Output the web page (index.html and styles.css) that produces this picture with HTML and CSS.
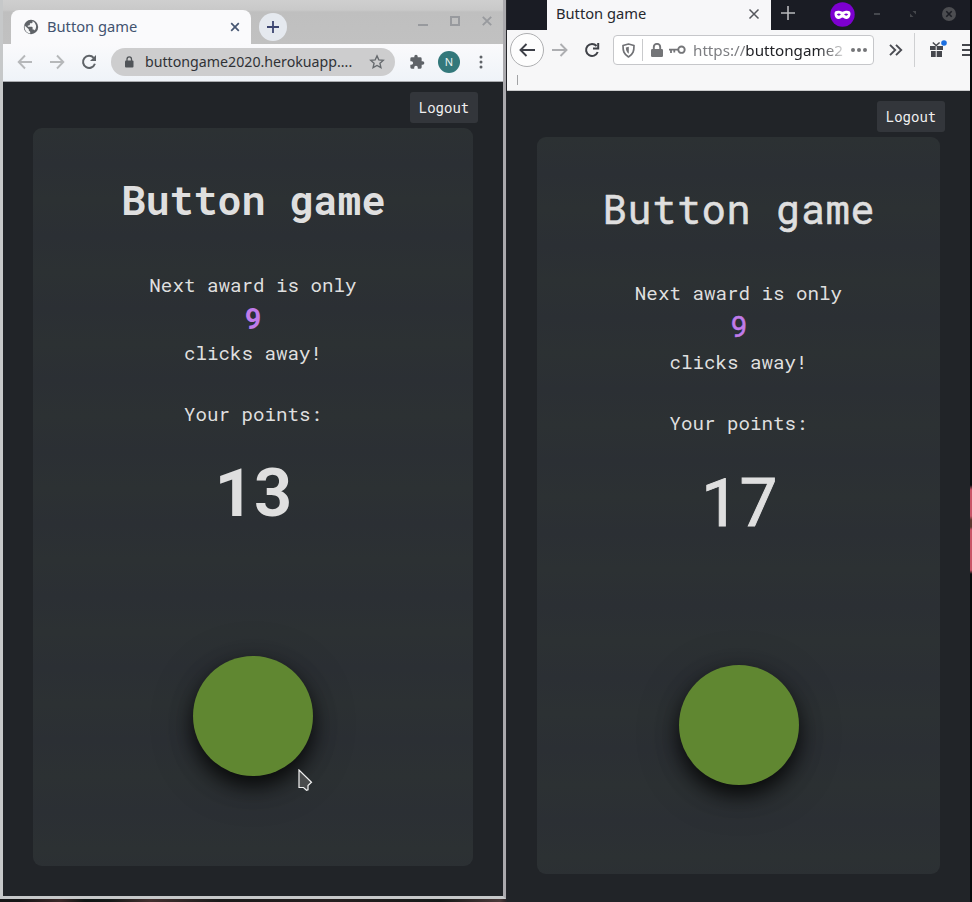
FILE: index.html
```html
<!DOCTYPE html>
<html lang="en">
<head>
<meta charset="utf-8">
<title>Button game</title>
<link rel="stylesheet" href="styles.css">
</head>
<body>
<div class="desktop">
  <section class="window chrome">
    <header class="c-strip">
      <div class="c-tab">
        <svg width="16" height="16" viewBox="0 0 16 16"><circle cx="8" cy="8" r="7.2" fill="#5f6368"/><path d="M1.6 6.4 5.8 10.3v1.2l1.4 1.2v1.7C4 14.200 1.600 11.500 1.600 8zM9.600 1.900v1c0 .8-.6 1.400-1.400 1.400H6.900v1.300c0 .5-.4.800-.8.800H4.800v1.400h4.100c.4 0 .7.300.7.700v2h.8c.6 0 1.100.4 1.300.9A6.200 6.200 0 0 0 9.600 1.900z" fill="#f6f7f8"/></svg>
        <span class="c-title">Button game</span>
        <svg width="10" height="10" viewBox="0 0 10 10"><path d="M1.200 1.200l7.600 7.600M8.800 1.200 1.200 8.800" stroke="#465672" stroke-width="1.700"/></svg>
      </div>
      <div class="c-new"><svg width="14" height="14" viewBox="0 0 14 14"><path d="M7 1v12M1 7h12" stroke="#3c4570" stroke-width="1.800"/></svg></div>
      <div class="c-controls">
        <svg width="10" height="12" viewBox="0 0 10 12"><path d="M0 10h10" stroke="#989a9e" stroke-width="2"/></svg>
        <svg width="10" height="12" viewBox="0 0 10 12"><path d="M1 2h8v8H1z" fill="none" stroke="#989a9e" stroke-width="2"/></svg>
        <svg width="10" height="12" viewBox="0 0 10 12"><path d="M.8 1.800l8.400 8.400M9.200 1.800.8 10.200" stroke="#989a9e" stroke-width="1.900"/></svg>
      </div>
    </header>
    <div class="c-toolbar">
      <svg class="c-nav" width="16" height="16" viewBox="0 0 16 16"><path d="M15 8H2M8 1.500 1.700 8 8 14.500" fill="none" stroke="#b6b8ba" stroke-width="1.900"/></svg>
      <svg class="c-nav" width="16" height="16" viewBox="0 0 16 16"><path d="M1 8h13M8 1.500 14.300 8 8 14.500" fill="none" stroke="#b6b8ba" stroke-width="1.900"/></svg>
      <svg class="c-reload" width="16" height="16" viewBox="0 0 16 16"><path d="M12.700 3.800A6.100 6.100 0 1 0 13.900 9.800" fill="none" stroke="#5f6368" stroke-width="2"/><path d="M15 1v6H9z" fill="#5f6368"/></svg>
      <div class="c-url">
        <svg width="10" height="12" viewBox="0 0 10 12"><rect x="1" y="4.500" width="8.500" height="7" rx="1" fill="#505458"/><path d="M3 5V3.200a2.250 2.250 0 0 1 4.500 0V5" fill="none" stroke="#505458" stroke-width="1.300"/></svg>
        <span class="c-address">buttongame2020.herokuapp....</span>
        <svg width="16" height="16" viewBox="0 0 16 16"><path d="M8 1.900l1.850 4.050 4.400.45-3.300 2.950.95 4.350L8 11.450 4.100 13.700l.95-4.350-3.300-2.950 4.400-.45z" fill="none" stroke="#666a6e" stroke-width="1.400"/></svg>
      </div>
      <svg class="c-puzzle" width="16" height="16" viewBox="0 0 24 24"><path d="M20.500 11H19V7a2 2 0 0 0-2-2h-4V3.500a2.500 2.500 0 0 0-5 0V5H4a2 2 0 0 0-2 2v3.800h1.500a2.700 2.700 0 0 1 0 5.400H2V20a2 2 0 0 0 2 2h3.800v-1.500a2.700 2.700 0 0 1 5.400 0V22H17a2 2 0 0 0 2-2v-4h1.500a2.500 2.500 0 0 0 0-5z" fill="#5f6368"/></svg>
      <span class="c-avatar">N</span>
      <svg class="c-more" width="4" height="14" viewBox="0 0 4 14"><circle cx="2" cy="2" r="1.500" fill="#5f6368"/><circle cx="2" cy="7" r="1.500" fill="#5f6368"/><circle cx="2" cy="12" r="1.500" fill="#5f6368"/></svg>
    </div>
    <main class="page">
      <button class="logout">Logout</button>
      <div class="card">
        <h1 class="title">Button game</h1>
        <p class="line">Next award is only</p>
        <p class="clicks">9</p>
        <p class="line">clicks away!</p>
        <p class="line label">Your points:</p>
        <p class="points">13</p>
        <div class="push"></div>
      </div>
    </main>
    <svg class="cursor" width="15" height="23" viewBox="0 0 15 23"><path d="M1 1v17.500h4.500l3 2.700 1.500-.5v-4.200l3.500-3.200z" fill="#494b4c" stroke="#f1f1f1" stroke-width="1.200"/></svg>
  </section>

  <section class="window firefox">
    <header class="f-strip">
      <div class="f-tab"><span>Button game</span>
        <svg width="12" height="12" viewBox="0 0 12 12"><path d="M1.500 1.500l9 9M10.500 1.500l-9 9" stroke="#55575d" stroke-width="1.500"/></svg>
      </div>
      <svg class="f-plus" width="14" height="14" viewBox="0 0 14 14"><path d="M7 0v14M0 7h14" stroke="#b8b9bc" stroke-width="1.600"/></svg>
      <svg class="f-mask" width="25" height="25" viewBox="0 0 25 25"><circle cx="12.500" cy="12.500" r="12.200" fill="#7d00d0"/><path fill-rule="evenodd" d="M4.500 11.500C4.500 9 6.500 8.500 9 8.700c1.500.1 2.500 1 3.500 1s2-.9 3.500-1c2.500-.2 4.500.3 4.500 2.800 0 3.300-1.700 5.500-4.200 5.500-2 0-2.500-1.500-3.800-1.500S10.700 17 8.700 17c-2.500 0-4.200-2.200-4.200-5.500zM6.800 12.500c1.300 1.500 2.800 1.500 4.100 0-1.300-1.400-2.800-1.400-4.100 0zm7.300 0c1.300 1.500 2.800 1.500 4.100 0-1.300-1.400-2.800-1.400-4.100 0z" fill="#fff"/></svg>
      <svg class="f-min" width="6" height="6" viewBox="0 0 6 6"><path d="M0 3h6" stroke="#55575d" stroke-width="1.500"/></svg>
      <svg class="f-max" width="6" height="6" viewBox="0 0 6 6"><path d="M2.500 0H6v3.500zM0 2.500V6h3.500z" fill="#44464b"/></svg>
      <svg class="f-close" width="14" height="14" viewBox="0 0 14 14"><circle cx="7" cy="7" r="7" fill="#4c4d51"/><path d="M4.300 4.300l5.400 5.400M9.700 4.300 4.300 9.700" stroke="#1b1d24" stroke-width="1.600"/></svg>
    </header>
    <div class="f-chrome">
      <div class="f-toolbar">
        <div class="f-back"><svg width="16" height="14" viewBox="0 0 16 14"><path d="M16 7H2M7.500 1 1.500 7l6 6" fill="none" stroke="#3d3f47" stroke-width="1.900"/></svg></div>
        <svg class="f-forward" width="16" height="14" viewBox="0 0 16 14"><path d="M0 7h14M8.500 1l6 6-6 6" fill="none" stroke="#adaeb1" stroke-width="1.900"/></svg>
        <svg class="f-reload" width="16" height="16" viewBox="0 0 16 16"><path d="M12.600 4A6 6 0 1 0 13.700 10" fill="none" stroke="#3f4147" stroke-width="2"/><path d="M14.200 1v5.600H9" fill="none" stroke="#3f4147" stroke-width="2"/></svg>
        <div class="f-url">
          <svg class="f-shield" width="13" height="15" viewBox="0 0 13 15"><path d="M6.500 1 12 2.500c0 5.500-.6 8.500-5.500 11.500C1.600 11 1 8 1 2.500z" fill="none" stroke="#717276" stroke-width="1.700" stroke-linejoin="round"/><path d="M6.800 3.800v7C4.500 9 3.900 7.500 3.800 4.600z" fill="#717276"/></svg>
          <i class="f-sep"></i>
          <svg class="f-lock" width="12" height="14" viewBox="0 0 12 14"><rect y="6" width="12" height="8" rx="1.200" fill="#747578"/><path d="M2.800 7V4a3.200 3.200 0 0 1 6.400 0v3" fill="none" stroke="#747578" stroke-width="1.900"/></svg>
          <svg class="f-key" width="17" height="10" viewBox="0 0 17 10"><circle cx="12.500" cy="4.700" r="3.200" fill="none" stroke="#747578" stroke-width="1.900"/><path d="M0 4.700h9M2 5v3M5.300 5v2.500" stroke="#747578" stroke-width="1.800"/></svg>
          <span class="f-address"><span class="dim">https://</span>buttongame2</span>
          <svg class="f-dots" width="16" height="4" viewBox="0 0 16 4"><circle cx="2" cy="2" r="2" fill="#747578"/><circle cx="8" cy="2" r="2" fill="#747578"/><circle cx="14" cy="2" r="2" fill="#747578"/></svg>
        </div>
        <svg class="f-chevrons" width="14" height="12" viewBox="0 0 14 12"><path d="M1 .8 6.200 6 1 11.200M7 .8 12.200 6 7 11.200" fill="none" stroke="#4a4c52" stroke-width="1.900"/></svg>
        <i class="f-divider"></i>
        <svg class="f-gift" width="19" height="18" viewBox="0 0 19 18"><path d="M1 6h5.700v4H1zM7.700 6h6.300v4H7.700zM2 11h4.700v6H2zM7.700 11H13v6H7.700z" fill="#45474d"/><path d="M3.800 2.500l3.400 3 3.400-3" fill="none" stroke="#45474d" stroke-width="1.500"/><circle cx="15" cy="3" r="2.800" fill="#1b6fe0"/></svg>
        <svg class="f-menu" width="9" height="12" viewBox="0 0 9 12"><path d="M0 1h9M0 6h9M0 11h9" stroke="#45474d" stroke-width="1.800"/></svg>
      </div>
      <i class="f-bookmark"></i>
    </div>
    <main class="page">
      <button class="logout">Logout</button>
      <div class="card">
        <h1 class="title">Button game</h1>
        <p class="line">Next award is only</p>
        <p class="clicks">9</p>
        <p class="line">clicks away!</p>
        <p class="line label">Your points:</p>
        <p class="points">17</p>
        <div class="push"></div>
      </div>
    </main>
  </section>
  <aside class="wallpaper"></aside>
</div>
</body>
</html>
```
FILE: styles.css
```css
* { box-sizing: border-box; margin: 0; }
body { background: #171819; overflow: hidden; font-family: "Noto Sans", sans-serif; }
svg { display: block; flex: none; }
.desktop { display: flex; width: 972px; height: 902px; background: linear-gradient(90deg, #151617 0 20px, #3a2828 60px, #0e1413 85px, #151a19 110px, #42302f 150px, #1a1b1b 220px, #252020 330px, #151a19 440px, #4a3a3a 500px, #15161a 510px); }
.window { display: flex; flex-direction: column; flex: none; }

/* Left browser */
.chrome { position: relative; width: 506px; height: 899px; border: solid #c6c8c9; border-width: 0 3px 3px; border-right-color: #aaa9ad; }
.c-strip { display: flex; align-items: flex-start; height: 44px; background: linear-gradient(#cfcfcf, #c9c9c9 10px, #bfbfbf 12px, #c1c1c1); padding-left: 8px; flex: none; }
.c-tab { display: flex; align-items: center; width: 240px; height: 34px; margin-top: 10px; padding: 0 11px 0 12px; border-radius: 8px 8px 0 0; background: #fafafc; }
.c-title { flex: 1; margin-left: 8px; padding-bottom: 2px; font-size: 14.700px; line-height: 20px; color: #42536f; }
.c-new { display: flex; align-items: center; justify-content: center; width: 28px; height: 28px; margin: 13px 0 0 8px; border-radius: 50%; background: #e5e9ef; }
.c-controls { display: flex; gap: 22px; margin: 15px 0 0 131px; }
.c-toolbar { display: flex; align-items: center; height: 38px; padding: 0 0 1px 14px; background: linear-gradient(#fafafc, #eff3f8); border-bottom: 1px solid #a9abae; flex: none; }
.c-nav { margin-right: 16px; }
.c-url { display: flex; align-items: center; width: 284px; height: 28px; margin-left: 14px; padding: 0 10px 0 13px; border-radius: 14px; background: #cdcdce; }
.c-address { flex: 1; margin-left: 11px; padding-bottom: 1px; font-size: 14.200px; color: #303236; white-space: nowrap; }
.c-puzzle { margin-left: 14px; }
.c-avatar { display: block; width: 22px; height: 22px; margin-left: 13px; border-radius: 50%; background: #33787b; color: #e9f3f3; font: 11px/22px "Noto Sans", sans-serif; text-align: center; }
.c-more { margin-left: 19px; }
.cursor { position: absolute; left: 295px; top: 769px; }

/* Right browser */
.firefox { width: 464px; height: 902px; border-left: 1px solid #25262b; }
.f-strip { display: flex; align-items: center; height: 30px; padding: 0 0 2px 40px; background: #1a1c24; flex: none; }
.f-tab { display: flex; align-items: center; justify-content: space-between; width: 224px; height: 30px; padding: 0 11px 2px 9px; margin-bottom: -2px; background: #f7f7f9; font-size: 14.700px; color: #26282e; }
.f-tab span { padding-bottom: 2px; }
.f-plus { margin: 0 0 2px 10px; }
.f-mask { margin-left: 35px; }
.f-min { margin-left: 19px; }
.f-max { margin-left: 30px; }
.f-close { margin-left: 26px; }
.f-chrome { height: 61px; background: #f7f7f8; border-bottom: 1px solid #cbcccd; flex: none; overflow: hidden; }
.f-toolbar { display: flex; align-items: center; height: 40px; padding-left: 3px; }
.f-back { display: flex; align-items: center; justify-content: center; width: 34px; height: 34px; border: 1px solid #aeafb1; border-radius: 50%; background: #fdfdfd; flex: none; }
.f-forward { margin-left: 8px; }
.f-reload { margin-left: 16px; }
.f-url { display: flex; align-items: center; width: 261px; height: 30px; margin-left: 13px; padding-left: 8px; border: 1px solid #c6c7ca; border-radius: 4px; background: #fff; flex: none; }
.f-sep { width: 1px; height: 22px; margin-left: 7px; background: #c9cacc; }
.f-lock { margin-left: 8px; }
.f-key { margin-left: 6px; }
.f-address { width: 151px; margin-left: 7px; font-size: 15.200px; color: #222327; white-space: nowrap; overflow: hidden; -webkit-mask-image: linear-gradient(90deg, #000 125px, rgba(0,0,0,.15) 151px); mask-image: linear-gradient(90deg, #000 125px, rgba(0,0,0,.15) 151px); }
.dim { color: #7d7e82; }
.f-dots { margin-left: 7px; }
.f-chevrons { margin-left: 15px; }
.f-divider { width: 1px; height: 34px; margin-left: 11px; background: #cfd0d2; flex: none; }
.f-gift { margin: -3px 0 0 14px; }
.f-menu { margin-left: 14px; }
.f-bookmark { display: block; width: 1px; height: 10px; margin: 5px 0 0 10px; background: #a2a3a5; }

/* Game */
.page { display: flex; flex-direction: column; flex: 1; padding: 10px 30px 0; background: #212428; font-family: "Roboto Mono", "DejaVu Sans Mono", monospace; }
.logout { align-self: flex-end; width: 68px; height: 31px; margin: 0 -5px 5px 0; padding: 0; border: 0; border-radius: 3px; background: #33363b; color: #f0f0f0; font: 14px/31px "Roboto Mono", "DejaVu Sans Mono", monospace; flex: none; }
.card { display: flex; flex-direction: column; align-items: center; height: 738px; padding-top: 42px; border-radius: 9px; background: repeating-linear-gradient(#2c3133 0, #2b2f34 36px, #2c3133 72px); color: #dfdfdf; flex: none; }
.title { font-size: 40px; line-height: 60px; font-weight: 700; padding-left: 1px; }
.line { font-size: 19.200px; line-height: 34px; }
.title + .line { margin-top: 38px; }
.clicks { margin: -1px 0 1px; padding-left: 1px; font: 700 28.800px/34px "Roboto Mono", Roboto, sans-serif; color: #c07bea; }
.label { margin-top: 27px; }
.points { margin-top: 14px; font: 700 67px/90px "Roboto Mono", Roboto, sans-serif; letter-spacing: -1.800px; }
.push { width: 120px; height: 120px; margin-top: 121px; border-radius: 50%; background: #608731; box-shadow: 0 10px 20px rgba(0,0,0,.75), 0 8px 44px rgba(0,0,0,.25); }
.firefox .card { height: 737px; }
.firefox .title { font-weight: 400; letter-spacing: .75px; -webkit-text-stroke: .6px #dfdfdf; }
.firefox .title + .line { margin-top: 37px; }
.firefox .clicks { margin-bottom: 2px; font-weight: 400; -webkit-text-stroke: .5px #c07bea; }
.firefox .points { margin-top: 15px; font-weight: 400; -webkit-text-stroke: 1px #dfdfdf; }
.firefox .push { margin-top: 120px; }
.wallpaper { width: 2px; background: linear-gradient(#080b0d 485px, #c95467 490px, #c95467 516px, #5b352c 520px, #5b352c 527px, #c95467 530px, #c95467 570px, #080b0d 574px); }
```
